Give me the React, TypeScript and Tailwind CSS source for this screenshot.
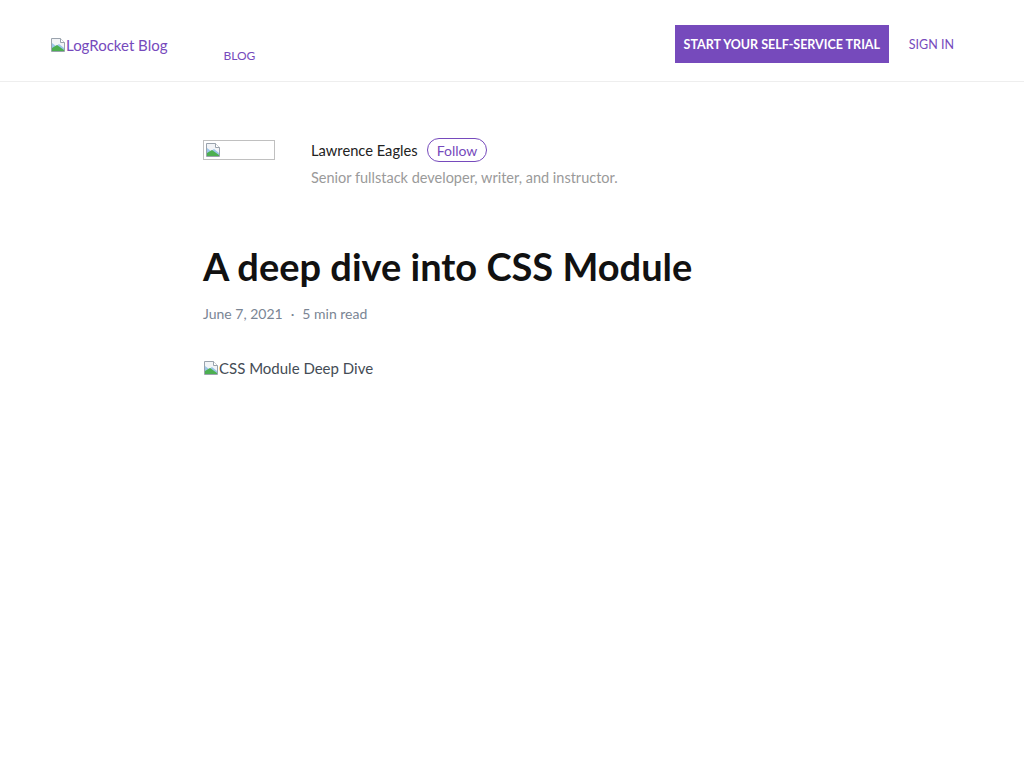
import React from 'react';

const BrokenImage: React.FC = () => (
  <svg width="16" height="16" viewBox="0 0 16 16" className="shrink-0">
    <path d="M1.5 1.5h9l4 4v9h-13z" fill="#f2f4f7" stroke="#9aa3ad" />
    <path d="M2 6l4 3 3-2 5 4v3H2z" fill="#9cc6e8" />
    <path d="M2 11l5-3 7 5v1H2z" fill="#4caf50" />
    <path d="M10.5 1.5v4h4" fill="#ffffff" stroke="#9aa3ad" />
  </svg>
);

const App: React.FC = () => (
  <div className="min-h-screen bg-white font-['Lato','Open_Sans',sans-serif]">
    <header className="h-[82px] border-b border-[#eeeeee] flex items-start">
      <div className="flex items-center pl-[50px] pt-[37px] text-[15px] text-[#764abc] leading-none">
        <BrokenImage />
        <span>LogRocket Blog</span>
      </div>
      <nav className="ml-[56px] pt-[50px] text-[12px] text-[#764abc] leading-none">BLOG</nav>
      <div className="ml-auto flex items-center pt-[25px] pr-[70px]">
        <button className="h-[38px] w-[214px] pt-[3px] bg-[#764abc] text-white text-[12.5px] font-bold">
          START YOUR SELF-SERVICE TRIAL
        </button>
        <span className="ml-[20px] pt-[3px] text-[12.5px] text-[#764abc]">SIGN IN</span>
      </div>
    </header>

    <main className="pl-[203px] pt-[56px]">
      <div className="flex items-start">
        <div className="w-[72px] h-[20px] border border-[#c0c0c0] mt-[2px] p-[1px]">
          <BrokenImage />
        </div>
        <div className="ml-[36px]">
          <div className="flex items-center">
            <span className="text-[14.7px] text-[#222222]">Lawrence Eagles</span>
            <span className="ml-[9px] h-[24px] px-[9px] rounded-full border border-[#764abc] text-[#764abc] text-[14px] flex items-center">
              Follow
            </span>
          </div>
          <p className="mt-[5px] text-[14.5px] text-[#9a9a9a]">Senior fullstack developer, writer, and instructor.</p>
        </div>
      </div>

      <h1 className="mt-[58px] text-[38px] font-bold text-[#111111] leading-none">A deep dive into CSS Module</h1>
      <div className="mt-[18px] text-[14px] text-[#7a8594] flex items-center">
        <span>June 7, 2021</span>
        <span className="mx-[8px]">·</span>
        <span>5 min read</span>
      </div>

      <div className="mt-[33px] flex items-center text-[15px] text-[#444c55]">
        <BrokenImage />
        <span>CSS Module Deep Dive</span>
      </div>
    </main>
  </div>
);

export default App;
